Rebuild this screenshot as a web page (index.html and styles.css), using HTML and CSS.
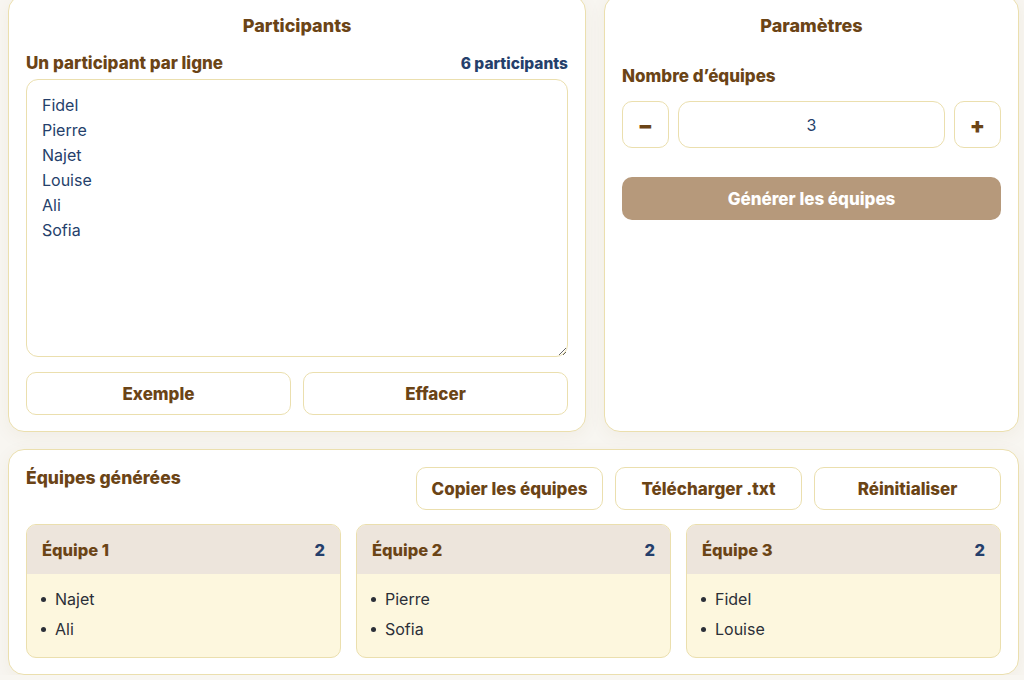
FILE: index.html
```html
<!DOCTYPE html>
<html lang="fr">
<head>
    <meta charset="UTF-8">
    <meta name="viewport" content="width=device-width, initial-scale=1.0">
    <title>Générateur d'équipes</title>
    <link rel="stylesheet" href="styles.css">
</head>
<body>

<div class="page">
    <div class="top-row">
        <div class="card">
            <h2 class="card-title">Participants</h2>
            <div class="field-head">
                <span class="label">Un participant par ligne</span>
                <span class="count">6 participants</span>
            </div>
            <textarea class="names">Fidel
Pierre
Najet
Louise
Ali
Sofia</textarea>
            <div class="btn-row">
                <button class="btn">Exemple</button>
                <button class="btn">Effacer</button>
            </div>
        </div>

        <div class="card">
            <h2 class="card-title">Paramètres</h2>
            <div class="label label-teams">Nombre d’équipes</div>
            <div class="stepper">
                <button class="btn step-btn">&minus;</button>
                <input class="step-value" type="text" value="3">
                <button class="btn step-btn">+</button>
            </div>
            <button class="generate-button">Générer les équipes</button>
        </div>
    </div>

    <div class="card results">
        <div class="results-head">
            <h2 class="results-title">Équipes générées</h2>
            <div class="results-actions">
                <button class="btn">Copier les équipes</button>
                <button class="btn">Télécharger .txt</button>
                <button class="btn">Réinitialiser</button>
            </div>
        </div>
        <div class="teams">
            <div class="team">
                <div class="team-head"><span>Équipe 1</span><span class="team-count">2</span></div>
                <ul class="team-list">
                    <li>Najet</li>
                    <li>Ali</li>
                </ul>
            </div>
            <div class="team">
                <div class="team-head"><span>Équipe 2</span><span class="team-count">2</span></div>
                <ul class="team-list">
                    <li>Pierre</li>
                    <li>Sofia</li>
                </ul>
            </div>
            <div class="team">
                <div class="team-head"><span>Équipe 3</span><span class="team-count">2</span></div>
                <ul class="team-list">
                    <li>Fidel</li>
                    <li>Louise</li>
                </ul>
            </div>
        </div>
    </div>
</div>

</body>
</html>
```

FILE: styles.css
```css
body {
    font-family: 'Inter', 'Liberation Sans', sans-serif;
    background-color: #f8f6f1;
    margin: 0;
    padding: 0;
    color: #6b4416;
}
.page {
    display: flex;
    flex-direction: column;
    gap: 17px;
    padding: 0 5px 0 8px;
    margin-top: -5px; /* scrolled a little past the top */
}
.top-row {
    display: grid;
    grid-template-columns: 578px 1fr;
    gap: 18px;
}
.card {
    background-color: #ffffff;
    border: 1px solid #ebdfae;
    border-radius: 16px;
    padding: 19px 17px 16px;
    box-shadow: 0 4px 18px rgba(120, 90, 40, 0.06);
    display: flex;
    flex-direction: column;
}
.card-title {
    margin: 0 0 16px;
    font-size: 18px;
    font-weight: 800;
    text-align: center;
    line-height: 22px;
}
.field-head {
    display: flex;
    justify-content: space-between;
    align-items: center;
    margin-bottom: 6px;
}
.label {
    font-size: 17px;
    font-weight: 800;
    line-height: 20px;
}
.count {
    font-size: 15.5px;
    font-weight: 800;
    color: #253f6b;
}
.names {
    height: 278px;
    box-sizing: border-box;
    border: 1px solid #ebdfae;
    border-radius: 12px;
    padding: 13px 15px;
    font-family: inherit;
    font-size: 16px;
    line-height: 25px;
    color: #253f6b;
    resize: vertical;
    outline: none;
}
.btn-row {
    display: grid;
    grid-template-columns: 1fr 1fr;
    gap: 12px;
    margin-top: 15px;
}
.btn {
    height: 43px;
    background-color: #ffffff;
    border: 1px solid #ebdfae;
    border-radius: 10px;
    font-family: inherit;
    font-size: 17px;
    font-weight: 800;
    color: #6b4416;
    cursor: pointer;
}
.label-teams {
    margin-top: 13px;
    margin-bottom: 15px;
}
.stepper {
    display: flex;
    gap: 9px;
}
.step-btn {
    width: 47px;
    height: 47px;
    flex: none;
    font-size: 22px;
    font-weight: 900;
    padding: 0;
}
.step-value {
    flex: 1;
    min-width: 0;
    height: 47px;
    box-sizing: border-box;
    border: 1px solid #ebdfae;
    border-radius: 12px;
    text-align: center;
    font-family: inherit;
    font-size: 16px;
    color: #253f6b;
    outline: none;
}
.generate-button {
    margin-top: 29px;
    height: 43px;
    border: none;
    border-radius: 10px;
    background-color: #b6997b;
    color: #ffffff;
    font-family: inherit;
    font-size: 17px;
    font-weight: 800;
}
.results {
    padding-top: 17px;
    padding-bottom: 16px;
}
.results-head {
    display: flex;
    justify-content: space-between;
    align-items: flex-start;
}
.results-title {
    margin: 0;
    padding-top: 1px;
    font-size: 17.5px;
    font-weight: 800;
    line-height: 20px;
}
.results-actions {
    display: flex;
    gap: 12px;
}
.results-actions .btn {
    width: 187px;
}
.teams {
    display: grid;
    grid-template-columns: repeat(3, 1fr);
    gap: 15px;
    margin-top: 14px;
}
.team {
    border: 1px solid #ebdfae;
    border-radius: 10px;
    overflow: hidden;
    background-color: #fdf7de;
}
.team-head {
    display: flex;
    justify-content: space-between;
    align-items: center;
    height: 49px;
    padding: 0 15px;
    background-color: #ede5dc;
    font-size: 16.5px;
    font-weight: 800;
}
.team-count {
    color: #253f6b;
}
.team-list {
    list-style: none;
    margin: 0;
    padding: 10px 0 13px 28px;
    color: #2b2f38;
    font-size: 16px;
    line-height: 30px;
}
.team-list li {
    position: relative;
}
.team-list li::before {
    content: "";
    position: absolute;
    left: -14px;
    top: 13px;
    width: 5px;
    height: 5px;
    border-radius: 50%;
    background-color: #2b2f38;
}
```
